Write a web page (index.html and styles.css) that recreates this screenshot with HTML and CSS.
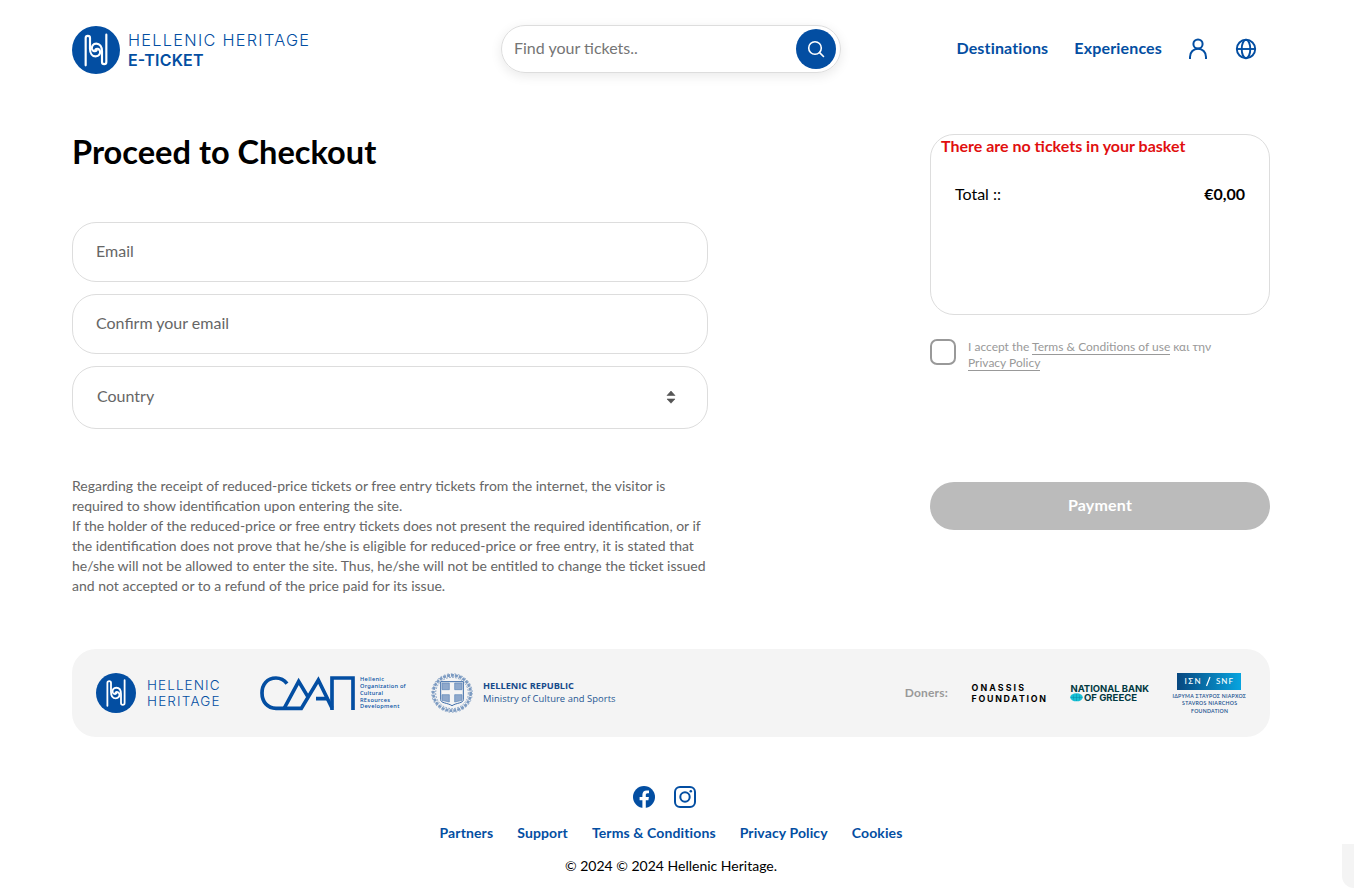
FILE: index.html
```
<!DOCTYPE html>
<html lang="en">
<head>
<meta charset="utf-8">
<title>Hellenic Heritage E-Ticket</title>
<link rel="stylesheet" href="styles.css">
</head>
<body>
<svg class="defs" aria-hidden="true">
  <symbol id="mark" viewBox="0 0 144 144">
    <circle cx="72" cy="72" r="72" fill="#034ea2"/>
    <g fill="none" stroke="#fff" stroke-width="6.5" stroke-linecap="round">
      <path id="scroll" d="M41 118V36a6.500 6.500 0 0 1 13 0V68C54 82 61 91 71 91C81 91 86 83 84 75C82 68 74 66 70 71"/>
      <use href="#scroll" transform="rotate(180 72 72)"/>
    </g>
  </symbol>
</svg>
<div class="page">
  <header class="header">
    <a class="brand">
      <svg class="brand-mark"><use href="#mark"/></svg>
      <svg class="brand-text" viewBox="0 0 182 48">
        <text class="quick light" x="-1" y="20.300" font-size="16.300" textLength="181">HELLENIC HERITAGE</text>
        <text class="quick strong" x="-1" y="39.700" font-size="16" textLength="75.500">E-TICKET</text>
      </svg>
    </a>
    <div class="search">
      <span>Find your tickets..</span>
      <button class="search-button" aria-label="Search">
        <svg width="20" height="20" viewBox="0 0 20 20" fill="none" stroke="#fff" stroke-width="1.600" stroke-linecap="round"><circle cx="9" cy="9" r="6.300"/><path d="M13.600 13.600L17.500 17.500"/></svg>
      </button>
    </div>
    <nav class="nav">
      <a>Destinations</a>
      <a>Experiences</a>
      <svg width="24" height="24" viewBox="0 0 24 24" fill="none" stroke="#034ea2" stroke-width="2"><circle cx="12" cy="7" r="4.600"/><path d="M4 22V20C4 15 7.500 11.800 12 11.800S20 15 20 20V22"/></svg>
      <svg width="24" height="24" viewBox="0 0 24 24" fill="none" stroke="#034ea2" stroke-width="1.900"><circle cx="12" cy="12" r="9.200"/><ellipse cx="12" cy="12" rx="4.300" ry="9.200"/><path d="M2.800 12H21.200"/></svg>
    </nav>
  </header>

  <main class="main">
    <section class="form">
      <h1>Proceed to Checkout</h1>
      <div class="field">Email</div>
      <div class="field">Confirm your email</div>
      <div class="field select">Country
        <svg width="10" height="14" viewBox="0 0 10 14" fill="#555"><path d="M1 5.500L5 1L9 5.500Z" stroke="#555" stroke-width=".6" stroke-linejoin="round"/><path d="M1 9L5 13.200L9 9Z" stroke="#555" stroke-width=".6" stroke-linejoin="round"/></svg>
      </div>
      <p class="notice">Regarding the receipt of reduced-price tickets or free entry tickets from the internet, the visitor is<br>required to show identification upon entering the site.<br>If the holder of the reduced-price or free entry tickets does not present the required identification, or if<br>the identification does not prove that he/she is eligible for reduced-price or free entry, it is stated that<br>he/she will not be allowed to enter the site. Thus, he/she will not be entitled to change the ticket issued<br>and not accepted or to a refund of the price paid for its issue.</p>
    </section>
    <aside class="side">
      <div class="basket">
        <strong class="empty">There are no tickets in your basket</strong>
        <div class="total"><span>Total ::</span><strong>€0,00</strong></div>
      </div>
      <div class="accept">
        <span class="checkbox"></span>
        <p>I accept the <a>Terms &amp; Conditions of use</a> και την<br><a>Privacy Policy</a></p>
      </div>
      <button class="pay">Payment</button>
    </aside>
  </main>

  <section class="sponsors">
    <svg class="heritage-mark"><use href="#mark"/></svg>
    <svg class="heritage-text" viewBox="0 0 74 40">
      <text class="quick light" x="-1" y="17" font-size="13.500" textLength="72.500">HELLENIC</text>
      <text class="quick light" x="-1" y="32.800" font-size="13.500" textLength="72.500">HERITAGE</text>
    </svg>
    <svg class="hocred" viewBox="30 39 440 120">
      <g fill="none" stroke="#034ea2" stroke-width="11">
        <path d="M111 71C101 58 90 54 78 54C51 54 36 74 36 99C36 126 53 145 78 145H154L205 60L246 144"/>
        <path d="M103 144L146 64L173 109M198 116H232"/>
        <path d="M246 150V54H309V150"/>
      </g>
      <g fill="#034ea2" font-size="17">
        <text x="330" y="62" textLength="72">Hellenic</text>
        <text x="330" y="83" textLength="137">Organization of</text>
        <text x="330" y="104" textLength="69">Cultural</text>
        <text x="330" y="125" textLength="90">REsources</text>
        <text x="330" y="145" textLength="118">Development</text>
      </g>
    </svg>
    <svg class="crest" viewBox="0 0 126 120">
      <g fill="none" stroke="#7c9bc2">
        <ellipse cx="63" cy="60" rx="56" ry="53" stroke-width="8" stroke-dasharray="9 3"/>
        <ellipse cx="63" cy="60" rx="49" ry="47" stroke-width="3" stroke-dasharray="5 4"/>
        <ellipse cx="63" cy="60" rx="61" ry="58" stroke-width="2.500" stroke-dasharray="5 6"/>
      </g>
      <path d="M29 26H97V80C97 91 77 89 63 98C49 89 29 91 29 80Z" fill="#f4f4f4" stroke="#3c6ba8" stroke-width="3"/>
      <path d="M33 30H55V50H33ZM71 30H93V50H71ZM33 65H55V87L33 82ZM71 65H93V82L71 87Z" fill="#8fa9cc" stroke="#5d86b9" stroke-width="2"/>
    </svg>
    <svg class="ministry" viewBox="0 0 134 40">
      <text x="0" y="16.200" font-size="9.600" font-weight="bold" fill="#164a8b" textLength="91" lengthAdjust="spacingAndGlyphs">HELLENIC REPUBLIC</text>
      <text x="0" y="29.200" font-size="9.400" fill="#265793" textLength="132.500">Ministry of Culture and Sports</text>
    </svg>
    <span class="doners">Doners:</span>
    <svg class="onassis" viewBox="0 0 76 40">
      <text x=".5" y="17.500" textLength="52.500">ONASSIS</text>
      <text x=".5" y="29" textLength="74.500">FOUNDATION</text>
    </svg>
    <svg class="bank" viewBox="0 0 80 40">
      <text x=".5" y="18.700" textLength="78.500" lengthAdjust="spacingAndGlyphs">NATIONAL BANK</text>
      <text x="14" y="27.700" textLength="53" lengthAdjust="spacingAndGlyphs">OF GREECE</text>
      <ellipse cx="6.500" cy="24.300" rx="6.300" ry="4" fill="#16bfd4"/>
      <path d="M1 24.500H12M6.500 21V28M3.500 22.500V26.500M9.500 22.500V26.500" stroke="#078ba8" stroke-width=".5"/>
    </svg>
    <svg class="snf" viewBox="0 0 74 42">
      <defs><linearGradient id="snf-bg"><stop stop-color="#07477f"/><stop offset="1" stop-color="#08a4df"/></linearGradient></defs>
      <rect x="5" y="1" width="64" height="17" fill="url(#snf-bg)"/>
      <g fill="#fff" font-size="8" font-weight="500">
        <text x="12.500" y="12.200" textLength="16">ΙΣΝ</text>
        <text x="44" y="12.200" textLength="17">SNF</text>
      </g>
      <path d="M34.500 14L38 5" stroke="#fff" stroke-width="1.200"/>
      <g fill="#174f8c" font-size="5.200" font-weight="600">
        <text x=".5" y="25.800" textLength="73.500">ΙΔΡΥΜΑ ΣΤΑΥΡΟΣ ΝΙΑΡΧΟΣ</text>
        <text x="10" y="33" textLength="55">STAVROS NIARCHOS</text>
        <text x="19" y="40.500" textLength="37">FOUNDATION</text>
      </g>
    </svg>
  </section>

  <footer class="footer">
    <div class="social">
      <svg width="24" height="24" viewBox="0 0 24 24"><circle cx="12" cy="12" r="11" fill="#034ea2"/><path d="M10.400 23V15.300H7.600V12.100H10.400V9.700C10.400 6.900 12.100 5.400 14.600 5.400C15.800 5.400 17 5.600 17 5.600V8.300H15.600C14.200 8.300 13.800 9.200 13.800 10V12.100H16.900L16.400 15.300H13.800V23Z" fill="#fff"/></svg>
      <svg width="24" height="24" viewBox="0 0 24 24" fill="none" stroke="#034ea2" stroke-width="2"><rect x="2" y="2" width="20" height="20" rx="5"/><circle cx="12" cy="12" r="4.700"/><circle cx="17.800" cy="6.200" r="1.300" fill="#034ea2" stroke="none"/></svg>
    </div>
    <nav class="links"><a>Partners</a><a>Support</a><a>Terms &amp; Conditions</a><a>Privacy Policy</a><a>Cookies</a></nav>
    <p class="copyright">© 2024 © 2024 Hellenic Heritage.</p>
  </footer>
</div>
<div class="drawer-edge"></div>
</body>
</html>
```
FILE: styles.css
```
* { box-sizing: border-box; }
body { margin: 0; height: 892px; overflow: hidden; background: #fff; color: #000; font: 16px/24px Lato, sans-serif; }
h1, p { margin: 0; }
button { border: 0; font-family: inherit; }
svg { display: block; flex: none; }
.defs { position: absolute; width: 0; height: 0; }
.page { width: 1198px; margin-left: 72px; }

.header { display: grid; grid-template-columns: 429px 340px 1fr; align-items: start; padding-top: 25px; height: 134px; }
.brand { display: flex; gap: 9px; padding-top: 1px; }
.brand-mark { width: 48px; height: 48px; }
.brand-text { width: 182px; height: 48px; overflow: visible; }
.quick { font-family: Inter, sans-serif; fill: #034ea2; }
.light { font-weight: 300; }
.strong { font-weight: 600; }
.search { display: flex; align-items: center; justify-content: space-between; height: 48px; padding: 0 4px 0 12px; border: 1px solid #ddd; border-radius: 24px; box-shadow: 0 3px 12px rgba(0, 0, 0, .09); color: #757575; }
.search span { padding-bottom: 2px; }
.search-button { display: grid; place-items: center; width: 40px; height: 40px; padding: 0; border-radius: 50%; background: #034ea2; }
.nav { display: flex; justify-content: flex-end; align-items: center; height: 48px; padding-right: 12px; gap: 24px; color: #034ea2; font-weight: 700; letter-spacing: .16px; }
.nav a { padding-bottom: 2px; }
.nav a + a { margin-left: 2px; }

.main { display: grid; grid-template-columns: 636px 340px; justify-content: space-between; height: 515px; }
h1 { height: 88px; font-size: 32.6px; line-height: 35px; font-weight: 700; }
.field { display: flex; align-items: center; height: 60px; padding: 0 23px 2px; margin-bottom: 12px; border: 1px solid #ddd; border-radius: 24px; color: #666; }
.select { justify-content: space-between; height: 63px; padding: 0 31px 3px 24px; margin-bottom: 47px; }
.select svg { margin-top: 2px; }
.notice { font-size: 14px; line-height: 20px; color: #666; white-space: nowrap; }
.basket { height: 181px; border: 1px solid #ddd; border-radius: 24px; }
.empty { display: block; height: 23px; line-height: 22px; padding-left: 10px; color: #e10f0f; }
.total { display: flex; justify-content: space-between; padding: 24px 24px 0; }
.accept { display: flex; gap: 12px; height: 143px; margin-top: 24px; color: #999; font-size: 12px; line-height: 16px; }
.accept a { border-bottom: 1px solid #999; }
.checkbox { width: 26px; height: 26px; border: 2px solid #999; border-radius: 7px; }
.pay { display: block; width: 340px; height: 48px; padding: 0 0 3px; border-radius: 24px; background: #bbb; color: #fff; font-size: 16px; font-weight: 700; letter-spacing: .2px; }

.sponsors { display: flex; align-items: center; height: 88px; padding: 0 24px; border-radius: 24px; background: #f4f4f4; }
.heritage-mark { width: 40px; height: 40px; }
.heritage-text { width: 74px; height: 40px; margin-left: 12px; overflow: visible; }
.hocred { width: 146.67px; height: 40px; margin-left: 38px; font-family: "Noto Sans", sans-serif; font-weight: 500; }
.crest { width: 42px; height: 40px; margin-left: 24px; }
.ministry { width: 134px; height: 40px; margin-left: 10px; font-family: "Open Sans", sans-serif; }
.doners { margin-left: auto; color: #999; font-size: 12px; font-weight: 700; letter-spacing: .2px; }
.onassis { width: 76px; height: 40px; margin-left: 23px; font: 700 8.8px Inter, sans-serif; }
.bank { width: 80px; height: 40px; margin-left: 23px; font: 700 9px Inter, sans-serif; fill: #003841; }
.snf { width: 74px; height: 42px; margin-left: 22px; }

.footer { display: flex; flex-direction: column; align-items: center; padding-top: 48px; font-size: 14px; }
.social { display: flex; gap: 17px; margin-right: 13px; }
.links { display: flex; gap: 24px; margin-top: 12px; color: #034ea2; font-weight: 700; letter-spacing: .12px; }
.copyright { margin-top: 9px; }
.drawer-edge { position: absolute; right: 0; bottom: 4px; width: 12px; height: 44px; border-bottom-left-radius: 24px; background: #f4f4f4; }
```
